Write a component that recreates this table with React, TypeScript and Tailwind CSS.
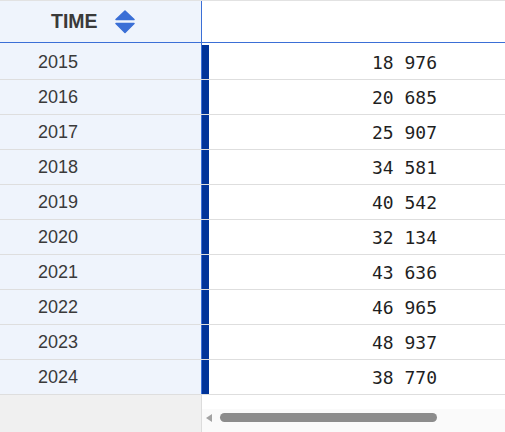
import React from "react";

const rows: [string, string][] = [
  ["2015", "18 976"],
  ["2016", "20 685"],
  ["2017", "25 907"],
  ["2018", "34 581"],
  ["2019", "40 542"],
  ["2020", "32 134"],
  ["2021", "43 636"],
  ["2022", "46 965"],
  ["2023", "48 937"],
  ["2024", "38 770"],
];

function SortIcon() {
  return (
    <svg width="20" height="24" viewBox="0 0 20 24" fill="#3b6fd6" stroke="#3b6fd6" strokeWidth="1.5" strokeLinejoin="round">
      <path d="M10 1 L19 9.5 L1 9.5 Z" />
      <path d="M1 13.5 L19 13.5 L10 22.5 Z" />
    </svg>
  );
}

export default function App() {
  return (
    <div className="w-[505px] h-[432px] overflow-hidden bg-white flex flex-col border-t border-[#e2e2e2] font-['Liberation_Sans',Arial,sans-serif]">
      {/* Header */}
      <div className="flex h-[42px] shrink-0 border-b border-[#3b6fd6]">
        <div className="w-[201px] bg-[#eff4fc] flex items-center pl-[51px] gap-[17px] pt-[1px]">
          <span className="text-[19.5px] font-bold text-[#3a3a3a] leading-none">TIME</span>
          <SortIcon />
        </div>
        <div className="w-px bg-[#3b6fd6]" />
        <div className="flex-1 bg-white" />
      </div>

      {/* Rows */}
      {rows.map(([year, value], i) => (
        <div
          key={year}
          className={`flex shrink-0 border-b border-[#dedede] ${i === 0 ? "h-[37px]" : "h-[35px]"}`}
        >
          <div
            className={`w-[201px] bg-[#eff4fc] flex items-center pl-[38px] text-[18px] text-[#3a3a3a] ${i === 0 ? "pt-[2px]" : ""}`}
          >
            {year}
          </div>
          <div className="w-px bg-[#3b6fd6]" />
          <div className={`flex-1 flex items-stretch ${i === 0 ? "pt-[2px]" : ""}`}>
            <div className="w-[7px] bg-[#003399]" />
            <div className="flex-1 flex items-center justify-end pr-[68px] font-['DejaVu_Sans_Mono',monospace] text-[18px] text-[#1f1f1f] whitespace-pre">
              {value}
            </div>
          </div>
        </div>
      ))}

      {/* Footer with horizontal scrollbar */}
      <div className="flex flex-1">
        <div className="w-[201px] bg-[#f0f0f0]" />
        <div className="w-px bg-[#dcdcdc]" />
        <div className="flex-1 flex flex-col bg-white">
          <div className="h-[14px]" />
          <div className="flex-1 bg-[#fafafa] flex items-start pt-[4px] pl-[4px] gap-[7px]">
            <svg width="7" height="8" viewBox="0 0 7 8" className="mt-[1px]">
              <path d="M6 0 L6 8 L0 4 Z" fill="#a3a3a3" />
            </svg>
            <div className="w-[217px] h-[9px] rounded-full bg-[#8c8c8c]" />
          </div>
        </div>
      </div>
    </div>
  );
}
